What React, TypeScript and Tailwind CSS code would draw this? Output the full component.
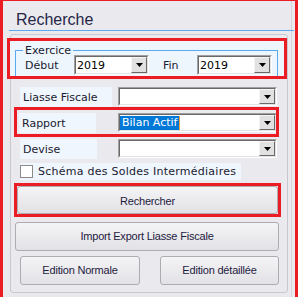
import React from 'react';

const label = "font-['DejaVu_Sans',sans-serif] text-[11px] leading-[13px] text-[#1a1a30]";
const btn =
  "flex items-center justify-center rounded-[3px] border border-[#acacb1] bg-gradient-to-b from-[#f4f4f6] to-[#e2e2e6] font-['Liberation_Sans',Arial,sans-serif] text-[11px] tracking-[-0.2px] text-[#1e2040]";

function Arrow() {
  return (
    <svg width="7" height="4" viewBox="0 0 7 4">
      <path d="M0 0h7L3.5 4z" fill="#000" />
    </svg>
  );
}

function Combo({ width, height = 20, children }: { width: number; height?: number; children?: React.ReactNode }) {
  return (
    <div
      className="border border-t-[#a0a0a0] border-l-[#a0a0a0] border-b-white border-r-white"
      style={{ width, height }}
    >
      <div className="flex h-full border border-t-[#696969] border-l-[#696969] border-b-[#e3e3e3] border-r-[#e3e3e3] bg-white">
        <div className="flex flex-1 items-center overflow-hidden">{children}</div>
        <div className="flex h-full w-[16px] items-center justify-center border border-t-[#f4f4f4] border-l-[#f4f4f4] border-b-[#696969] border-r-[#696969] bg-[#e1e1e1]">
          <Arrow />
        </div>
      </div>
    </div>
  );
}

export default function App() {
  return (
    <div className="relative h-[297px] w-[298px] overflow-hidden border-x-[3px] border-t border-[#ec1c24] bg-[#e9e9ee]">
      <div className="h-full w-[289px] border-r border-[#d4d4da]">
        {/* titre */}
        <div className="-mr-[3px] ml-[6px] h-[30px] border-b border-[#5aa9f0] pl-[7px] pt-[11px] font-['Liberation_Sans',Arial,sans-serif] text-[16px] leading-[16px] text-[#262646]">
          Recherche
        </div>

        <div className="ml-[7px] mt-[3px] flex h-[259px] w-[278px] flex-col rounded-[3px] border border-[#c8c8cd]">
          {/* exercice */}
          <div className="-ml-[4px] mt-[3px] h-[41px] w-[280px] bg-[#eef6fd] pt-[12px]">
            <div className="relative ml-[8px] h-[27px] w-[263px] border border-[#5aa9f0] pt-[4px]">
              <span className={`absolute -top-[7px] left-[7px] bg-[#eef6fd] px-[2px] ${label}`}>Exercice</span>
              <div className="flex h-[20px] items-center">
                <span className={`w-[58px] pl-[9px] ${label}`}>Début</span>
                <Combo width={75}>
                  <span className={`pl-[1px] ${label} text-black`}>2019</span>
                </Combo>
                <span className={`ml-[14px] w-[34px] ${label}`}>Fin</span>
                <Combo width={75}>
                  <span className={`pl-[1px] ${label} text-black`}>2019</span>
                </Combo>
              </div>
            </div>
          </div>

          {/* liasse fiscale */}
          <div className="mt-[8px] flex h-[20px] items-start">
            <div className={`ml-[9px] flex h-[20px] w-[92px] items-center bg-[#f0f6fd] pl-[3px] ${label}`}>Liasse Fiscale</div>
            <div className="ml-[6px]">
              <Combo width={159} height={19} />
            </div>
          </div>

          {/* rapport */}
          <div className="mt-[6px] flex h-[20px] items-start">
            <div className={`ml-[8px] flex h-[20px] w-[77px] items-center bg-[#f0f6fd] pl-[3px] ${label}`}>Rapport</div>
            <div className="ml-[22px]">
              <Combo width={159} height={19}>
                <span className={`my-[1px] flex h-[14px] items-center border-r border-[#f0a030] bg-[#0078d7] pl-[2px] pr-[1px] ${label} text-white`}>
                  Bilan Actif
                </span>
              </Combo>
            </div>
          </div>

          {/* devise */}
          <div className="mt-[6px] flex h-[20px] items-start">
            <div className={`ml-[9px] flex h-[20px] w-[77px] items-center bg-[#f0f6fd] pl-[3px] ${label}`}>Devise</div>
            <div className="ml-[21px]">
              <Combo width={159} height={19} />
            </div>
          </div>

          {/* case a cocher */}
          <div className="ml-[9px] mt-[4px] flex h-[17px] w-[221px] items-center bg-[#f0f6fd]">
            <div className="h-[13px] w-[13px] border border-[#8a8a8a] bg-white" />
            <span className={`ml-[5px] tracking-[0.25px] ${label}`}>Schéma des Soldes Intermédiaires</span>
          </div>

          <div className={`ml-[6px] mt-[6px] h-[28px] w-[261px] pt-[3px] ${btn}`}>Rechercher</div>
          <div className={`ml-[4px] mt-[8px] h-[29px] w-[264px] ${btn}`}>Import Export Liasse Fiscale</div>
          <div className="mt-[5px] flex">
            <div className={`ml-[9px] h-[29px] w-[120px] ${btn}`}>Edition Normale</div>
            <div className={`ml-[20px] h-[29px] w-[119px] ${btn}`}>Edition détaillée</div>
          </div>
        </div>
      </div>

      {/* cadres rouges d'annotation */}
      <div className="pointer-events-none absolute left-[4px] top-[37px] h-[41px] w-[280px] border-[3px] border-[#ec1c24]" />
      <div className="pointer-events-none absolute left-[11px] top-[106px] h-[30px] w-[265px] border-[3px] border-[#ec1c24]" />
      <div className="pointer-events-none absolute left-[11px] top-[182px] h-[34px] w-[267px] border-[3px] border-[#ec1c24]" />
    </div>
  );
}
